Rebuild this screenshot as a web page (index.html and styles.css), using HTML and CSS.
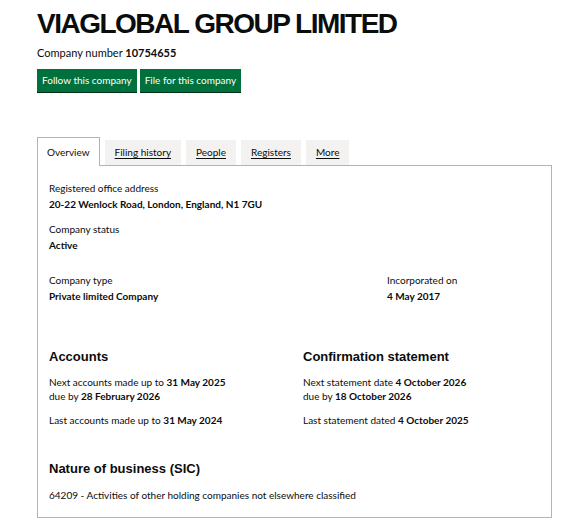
FILE: index.html
```html
<!DOCTYPE html>
<html lang="en">
<head>
<meta charset="utf-8">
<title>VIAGLOBAL GROUP LIMITED</title>
<link rel="stylesheet" href="styles.css">
</head>
<body>
<main class="page">
  <h1 class="title">VIAGLOBAL GROUP LIMITED</h1>
  <p class="company-number">Company number <strong>10754655</strong></p>
  <div class="actions">
    <a class="button" href="#">Follow this company</a>
    <a class="button" href="#">File for this company</a>
  </div>

  <nav class="tabs">
    <span class="tab tab--selected">Overview</span>
    <a class="tab" href="#">Filing history</a>
    <a class="tab" href="#">People</a>
    <a class="tab" href="#">Registers</a>
    <a class="tab" href="#">More</a>
  </nav>

  <section class="panel">
    <dl class="field">
      <dt>Registered office address</dt>
      <dd>20-22 Wenlock Road, London, England, N1 7GU</dd>
    </dl>
    <dl class="field field--status">
      <dt>Company status</dt>
      <dd>Active</dd>
    </dl>
    <div class="type-row">
      <dl class="field">
        <dt>Company type</dt>
        <dd>Private limited Company</dd>
      </dl>
      <dl class="field">
        <dt>Incorporated on</dt>
        <dd>4 May 2017</dd>
      </dl>
    </div>

    <div class="filing-row">
      <div class="filing">
        <h2 class="heading">Accounts</h2>
        <p class="line">Next accounts made up to <strong>31 May 2025</strong><br>due by <strong>28 February 2026</strong></p>
        <p class="line line--last">Last accounts made up to <strong>31 May 2024</strong></p>
      </div>
      <div class="filing">
        <h2 class="heading">Confirmation statement</h2>
        <p class="line">Next statement date <strong>4 October 2026</strong><br>due by <strong>18 October 2026</strong></p>
        <p class="line line--last">Last statement dated <strong>4 October 2025</strong></p>
      </div>
    </div>

    <h2 class="heading heading--sic">Nature of business (SIC)</h2>
    <ul class="sic">
      <li>64209 - Activities of other holding companies not elsewhere classified</li>
    </ul>
  </section>
</main>
</body>
</html>
```

FILE: styles.css
```css
* { box-sizing: border-box; }

html, body {
  margin: 0;
  padding: 0;
  background: #ffffff;
}

body {
  font-family: Lato, "Noto Sans", Arial, sans-serif;
  color: #0b0c0c;
  font-size: 10px;
}

.page {
  width: 515px;
  margin-left: 37px;
  padding-top: 9px;
}

.title {
  margin: 0;
  font-family: "Liberation Sans", Arial, sans-serif;
  font-weight: 700;
  font-size: 28px;
  letter-spacing: -1.5px;
  line-height: 30px;
  color: #0b0c0c;
}

.company-number {
  margin: 7px 0 0;
  font-size: 11px;
  line-height: 14px;
}

.company-number strong { font-weight: 700; }

.actions {
  display: flex;
  gap: 3px;
  margin-top: 9px;
}

.button {
  display: block;
  height: 23px;
  padding: 0 5px;
  background: #00703c;
  color: #ffffff;
  font-size: 10px;
  line-height: 23px;
  text-decoration: none;
  box-shadow: 0 1px 0 #002d18;
}

.tabs {
  display: flex;
  align-items: flex-end;
  gap: 5px;
  margin-top: 45px;
  height: 28px;
}

.tab {
  display: block;
  height: 25px;
  padding: 0 10px;
  background: #f3f2f1;
  color: #0b0c0c;
  font-size: 10px;
  line-height: 24px;
  text-decoration: underline;
  text-underline-offset: 2px;
}

.tab--selected {
  height: 29px;
  padding: 0 9px;
  background: #ffffff;
  border: 1px solid #b1b4b6;
  border-bottom: 0;
  line-height: 28px;
  text-decoration: none;
  margin-bottom: -1px;
  position: relative;
  z-index: 1;
}

.panel {
  border: 1px solid #b1b4b6;
  padding: 14px 11px 14px;
}

.field {
  margin: 0;
  line-height: 16px;
}

.field dt { margin: 0; }

.field dd {
  margin: 0;
  font-weight: 700;
}

.field--status { margin-top: 9px; }

.type-row {
  display: grid;
  grid-template-columns: 338px 1fr;
  margin-top: 19px;
}

.filing-row {
  display: grid;
  grid-template-columns: 254px 1fr;
  margin-top: 44px;
}

.heading {
  margin: 0;
  font-family: "Liberation Sans", Arial, sans-serif;
  font-weight: 700;
  font-size: 13px;
  line-height: 18px;
}

.line {
  margin: 9px 0 0;
  line-height: 14px;
}

.line--last { margin-top: 10px; }

.line strong { font-weight: 700; }

.heading--sic { margin-top: 33px; }

.sic {
  list-style: none;
  margin: 9px 0 0;
  padding: 0;
  line-height: 16px;
}
```
